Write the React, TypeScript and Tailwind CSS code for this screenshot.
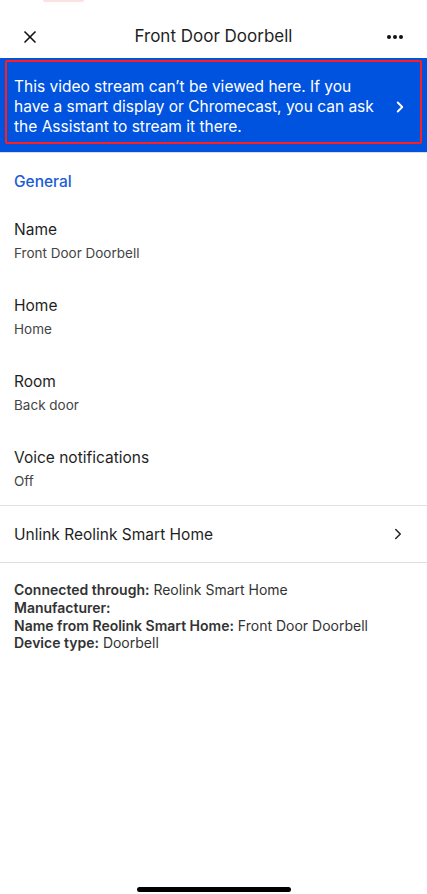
import { X, ChevronRight } from "lucide-react";

const rows = [
  { label: "Name", value: "Front Door Doorbell" },
  { label: "Home", value: "Home" },
  { label: "Room", value: "Back door" },
  { label: "Voice notifications", value: "Off" },
];

const details = [
  { label: "Connected through:", value: "Reolink Smart Home" },
  { label: "Manufacturer:", value: "" },
  { label: "Name from Reolink Smart Home:", value: "Front Door Doorbell" },
  { label: "Device type:", value: "Doorbell" },
];

export default function App() {
  return (
    <div className="relative flex h-[894px] w-[427px] flex-col overflow-hidden bg-white font-['Inter',sans-serif] text-[#1f1f1f]">
      {/* sliver of something scrolled off the top */}
      <div className="absolute left-[43px] top-0 h-[2px] w-[41px] rounded-b bg-[#fde0e0]" />

      {/* top bar */}
      <div className="flex h-[58px] items-center px-[20px] pt-[16px]">
        <X size={20} strokeWidth={2} className="text-[#111]" />
        <h1 className="flex-1 text-center text-[17px] font-normal text-[#1f1f1f]">Front Door Doorbell</h1>
        <div className="flex gap-[2px] pr-[4px]">
          <span className="h-[4px] w-[4px] rounded-full bg-[#111]" />
          <span className="h-[4px] w-[4px] rounded-full bg-[#111]" />
          <span className="h-[4px] w-[4px] rounded-full bg-[#111]" />
        </div>
      </div>

      {/* stream banner */}
      <div className="border-b border-[#dcdcdc] bg-[#0053df] px-[5px] pb-[8px] pt-[2px]">
        <div className="flex items-center rounded-[2px] border-2 border-[#ff1e1e] pb-[5px] pl-[7px] pr-[11px] pt-[15px]">
          <p className="flex-1 text-[15.5px] leading-[20px] text-white">
            This video stream can&rsquo;t be viewed here. If you have a smart display or Chromecast, you can ask
            the Assistant to stream it there.
          </p>
          <ChevronRight size={18} strokeWidth={2.5} className="ml-[10px] text-white" />
        </div>
      </div>

      {/* general section */}
      <div className="px-[14px] pt-[17px]">
        <h2 className="text-[15.5px] font-medium text-[#1a5cd6]">General</h2>
      </div>
      <div className="flex flex-col gap-[34px] px-[14px] pb-[15px] pt-[27px]">
        {rows.map((r) => (
          <div key={r.label} className="flex flex-col gap-[4px]">
            <span className="text-[15.5px] leading-[20px] text-[#1f1f1f]">{r.label}</span>
            <span className="text-[13.5px] leading-[18px] text-[#444]">{r.value}</span>
          </div>
        ))}
      </div>

      <div className="flex h-[58px] items-center border-y border-[#e0e0e0] pl-[14px] pr-[20px]">
        <span className="flex-1 text-[15.5px] text-[#1f1f1f]">Unlink Reolink Smart Home</span>
        <ChevronRight size={18} strokeWidth={2} className="text-[#222]" />
      </div>

      <div className="flex flex-col px-[14px] pt-[18px] text-[14px] leading-[17.7px] text-[#333]">
        {details.map((d) => (
          <p key={d.label}>
            <span className="font-semibold text-[#333]">{d.label}</span> {d.value}
          </p>
        ))}
      </div>

      <div className="mt-auto flex justify-center pb-[2px]">
        <div className="h-[5px] w-[154px] rounded-full bg-black" />
      </div>
    </div>
  );
}
